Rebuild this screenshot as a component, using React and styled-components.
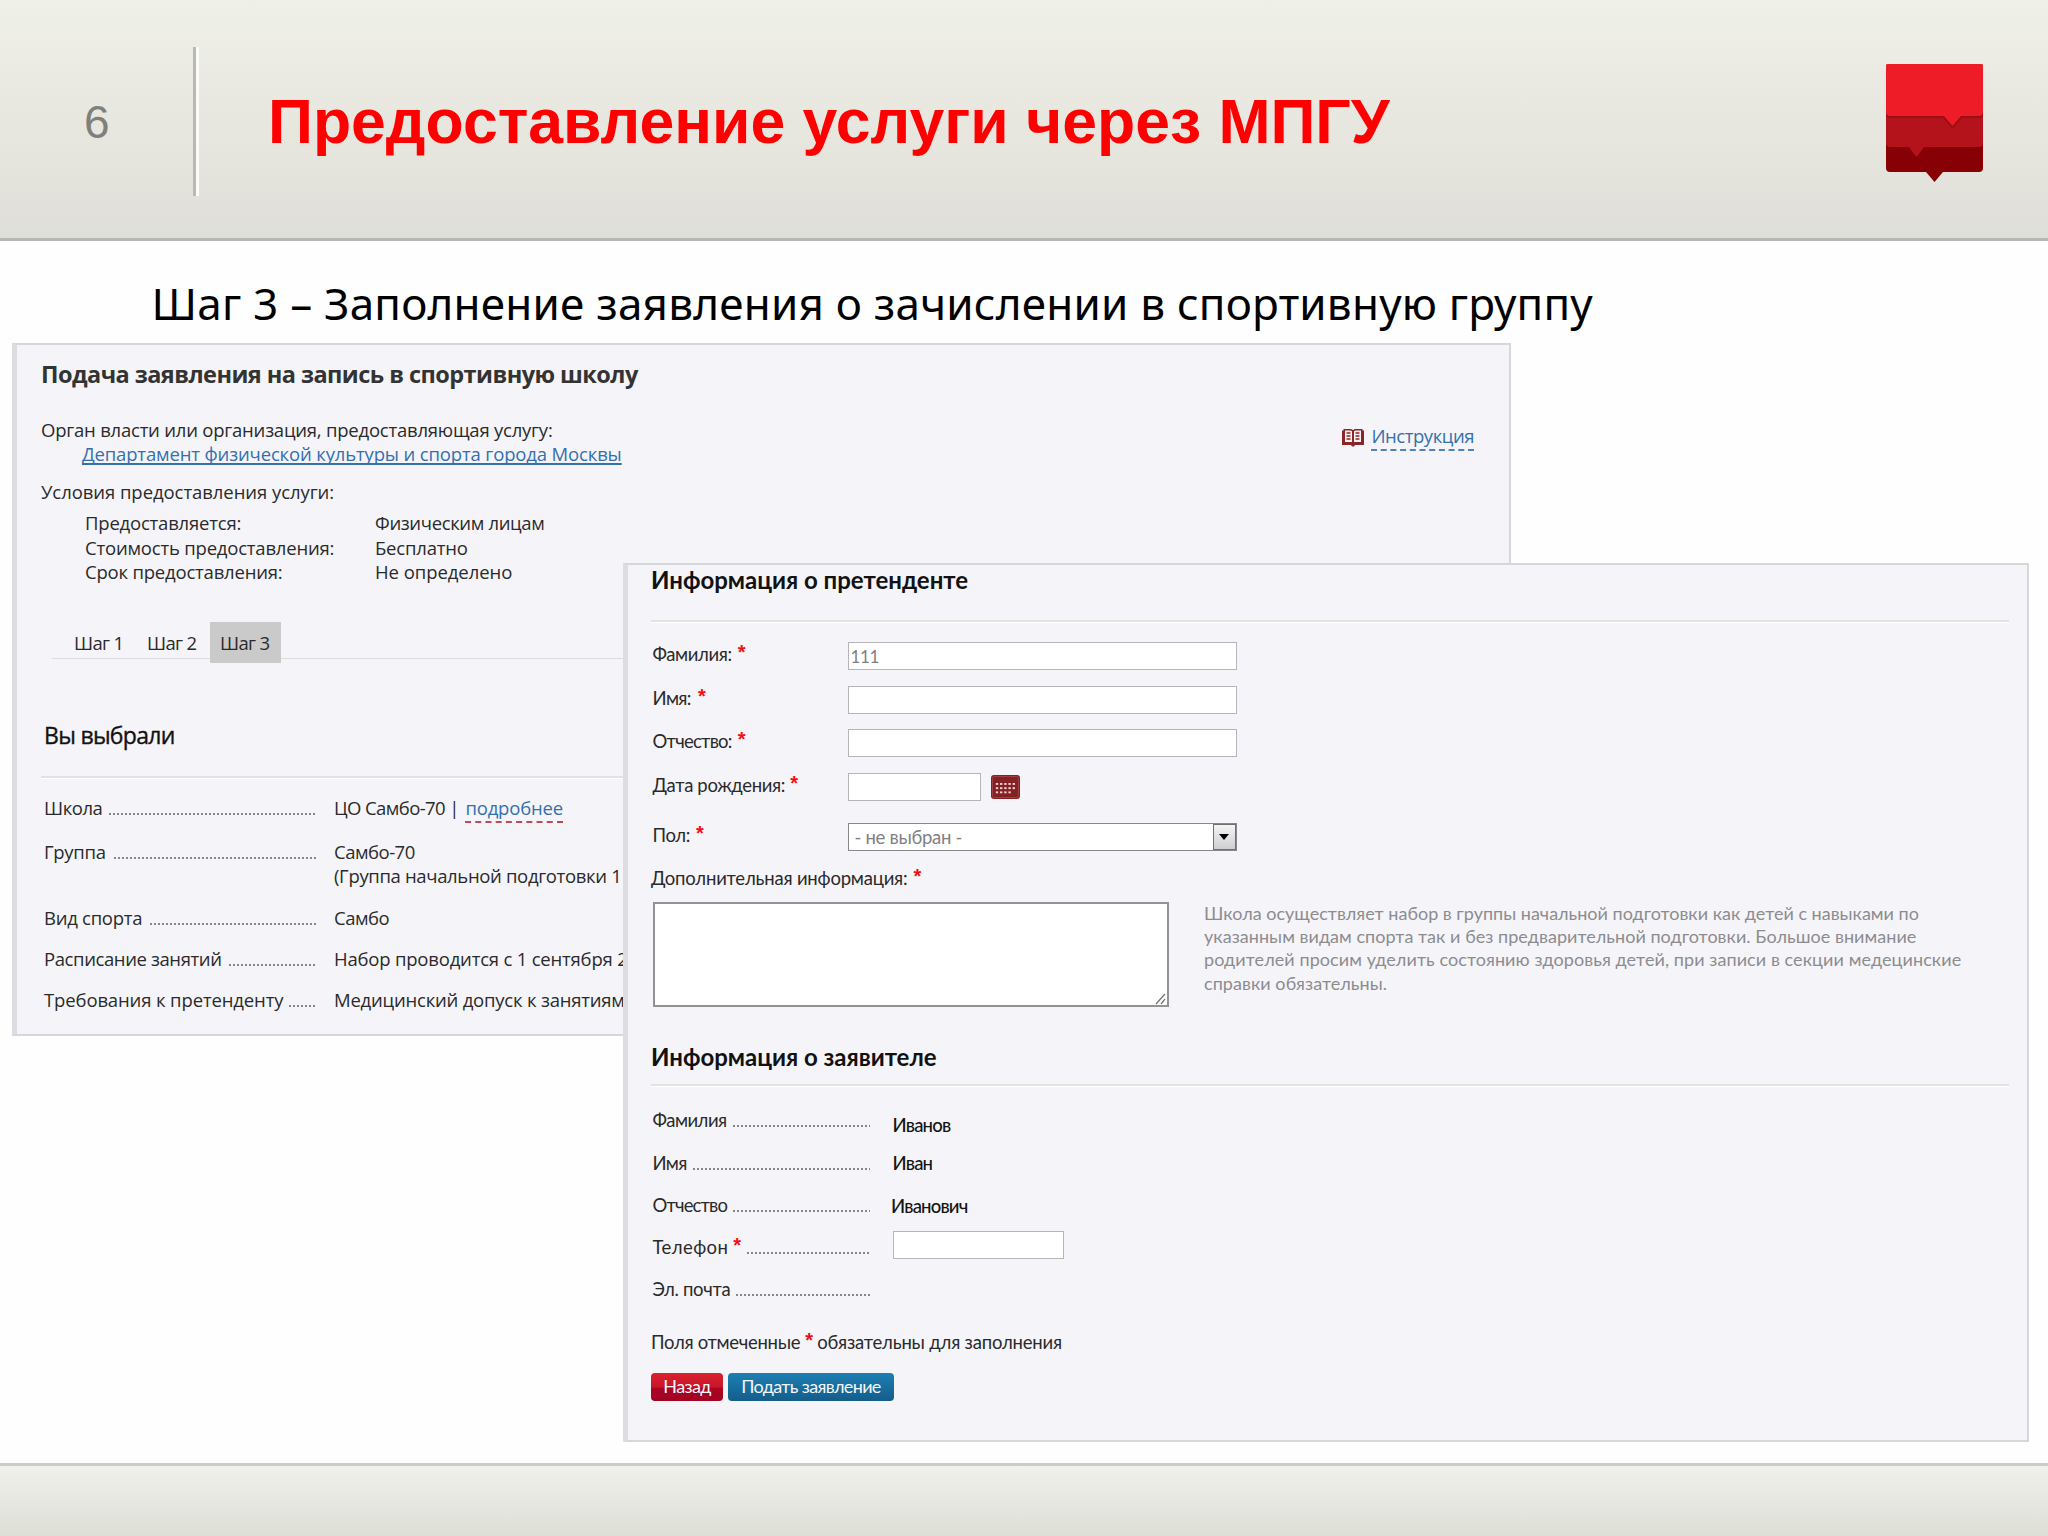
import React from "react";
import styled, { createGlobalStyle } from "styled-components";

const GlobalStyle = createGlobalStyle`
  * { box-sizing: border-box; }
  body { margin: 0; background: #fefefe; }
`;

const Slide = styled.div`
  width: 2048px;
  height: 1536px;
  display: flex;
  flex-direction: column;
  overflow: hidden;
  background: #fefefe;
`;

/* ---- header ---- */

const Header = styled.header`
  height: 241px;
  flex: none;
  display: flex;
  align-items: flex-start;
  padding: 0 65px 0 84px;
  background: linear-gradient(#eff0e8, #e6e5de 60%, #dfdfd9);
  border-bottom: 3px solid #b6b6b2;
  font-family: "Liberation Sans", Arial, sans-serif;
`;

const PageNumber = styled.div`
  width: 109px;
  font-size: 46px;
  line-height: 245px;
  color: #7f807a;
`;

const Divider = styled.div`
  width: 6px;
  height: 149px;
  margin: 47px 69px 0 0;
  background: linear-gradient(90deg, #b9b9b4 0 50%, #fbfbf8 50%);
`;

const Title = styled.h1`
  flex: 1;
  margin: 0;
  font-size: 62.5px;
  line-height: 242px;
  font-weight: 700;
  color: #fe0000;
  white-space: nowrap;
`;

const Logo = styled.svg`
  margin-top: 64px;
`;

/* ---- body ---- */

const Body = styled.main`
  position: relative;
  height: 1222px;
  flex: none;
`;

const Subtitle = styled.h2`
  margin: 0;
  padding: 32px 0 0 151.5px;
  height: 102px;
  font: 400 44px/60px "Noto Sans", sans-serif;
  letter-spacing: 0.22px;
  color: #000;
  white-space: nowrap;
`;

const Panel = styled.section`
  background: #f5f5f9;
  border: 2px solid #d6d7db;
  border-left: 5px solid #dcdce1;
  font-size: 18.5px;
  line-height: 24.4px;
  color: #2a2a2c;
  white-space: nowrap;
`;

const ServicePanel = styled(Panel)`
  width: 1499px;
  height: 693px;
  margin-left: 12px;
  padding: 13px 35px 0 24px;
  font-family: "Open Sans", sans-serif;
  letter-spacing: -0.2px;
`;

// lies over the bottom right part of the service panel
const FormPanel = styled(Panel)`
  position: absolute;
  left: 623px;
  top: 322px;
  width: 1406px;
  height: 879px;
  padding: 0 18px 0 23px;
  font-family: Lato, sans-serif;
  letter-spacing: -0.3px;
`;

const T = styled.span`
  letter-spacing: ${({ $ls }) => $ls}px;
`;

const PanelTitle = styled.h3`
  margin: 0 0 27.5px;
  font-size: 23.5px;
  line-height: 32px;
  font-weight: 700;
  letter-spacing: -0.55px;
  color: #333;
`;

const InfoRow = styled.div`
  display: flex;
  justify-content: space-between;
  height: 49px;
  margin-bottom: 13.2px;
`;

const OrgLink = styled.a`
  display: block;
  margin-left: 41px;
  letter-spacing: -0.15px;
  color: #3470ad;
  text-decoration: underline;
  text-decoration-thickness: 1.5px;
  text-underline-offset: 1.5px;
  text-decoration-skip-ink: none;
`;

const Instruction = styled.a`
  display: flex;
  gap: 6px;
  margin-top: 6px;
  height: 27px;
  color: #3470ad;
  letter-spacing: -0.45px;
  span { border-bottom: 2px dashed #4d83ba; }
  svg { margin-top: 4px; }
`;

const Terms = styled.dl`
  margin: 7.4px 0 38px 44px;
  display: grid;
  grid-template-columns: 290px auto;
  line-height: 24.3px;
  dd { margin: 0; }
`;

const Tabs = styled.nav`
  display: flex;
  height: 37px;
  margin: 0 0 59.5px 11px;
  border-bottom: 1.5px solid #dcdde0;
`;

const Tab = styled.div`
  width: ${({ $w }) => $w}px;
  height: 41px;
  padding: 9px 0 0 ${({ $pl }) => $pl}px;
  letter-spacing: -0.65px;
  background: ${({ $active }) => ($active ? "#cacaca" : "transparent")};
`;

const SectionTitle = styled.h3`
  margin: 0;
  border-bottom: 2px solid #e2e2e5;
  box-shadow: 0 1px 0 #fff;
  color: #121212;
  font-size: 24px;
`;

const ChoiceTitle = styled(SectionTitle)`
  padding: 0 0 25px 3px;
  margin-right: -30px;
  line-height: 32px;
  font-weight: 500;
  font-size: 23px;
  letter-spacing: -0.7px;
  -webkit-text-stroke: 0.35px #121212;
`;

const FormTitle = styled(SectionTitle)`
  height: ${({ $h }) => $h}px;
  line-height: 30px;
  font-weight: 700;
  letter-spacing: -0.02px;
`;

const Choices = styled.div`
  display: flex;
  flex-direction: column;
  gap: 16.9px;
  padding: 18px 0 0 3px;
`;

const Choice = styled.div`
  display: flex;
  align-items: flex-start;
  margin-bottom: ${({ $mb = 0 }) => $mb}px;
`;

const DottedLabel = styled.div`
  display: flex;
  align-items: baseline;
  gap: ${({ $gap = 7 }) => $gap}px;
  width: ${({ $w }) => $w}px;
  margin-right: ${({ $mr }) => $mr}px;
  letter-spacing: ${({ $ls }) => $ls}px;
  &::after {
    content: "";
    flex: 1;
    height: 2px;
    background: repeating-linear-gradient(90deg, #85858a 0 2px, transparent 2px 4px);
  }
`;

const MoreLink = styled.a`
  display: inline-block;
  height: 27.5px;
  margin: 0 0 -3px 2.5px;
  color: #3470ad;
  border-bottom: 2px dashed #c04a52;
`;

/* ---- form ---- */

const Required = styled.span`
  display: inline-block;
  font: 700 20px/20px "Liberation Sans", sans-serif;
  color: #f60d12;
  margin-left: ${({ $ml = 5 }) => $ml}px;
  transform: translateY(-2px);
`;

const Fields = styled.div`
  display: flex;
  flex-direction: column;
  gap: 15.7px;
  padding: 20px 0 0 1.5px;
`;

const Field = styled.label`
  display: flex;
  height: 28px;
  margin-top: ${({ $mt = 0 }) => $mt}px;
`;

const FieldLabel = styled.div`
  width: 195px;
  letter-spacing: ${({ $ls }) => $ls}px;
`;

const Box = styled.div`
  width: ${({ $w }) => $w}px;
  height: 28px;
  margin-top: ${({ $mt = 0 }) => $mt}px;
  padding: 2px 2px 0;
  border: 1.5px solid #b5b5ba;
  background: #fff;
  color: #808085;
  font-size: 17px;
`;

const SelectBox = styled(Box)`
  display: flex;
  justify-content: space-between;
  padding: 0 0 0 6px;
  line-height: 27px;
  font-size: 18.5px;
  border-color: #88888c;
`;

const SelectArrow = styled.div`
  width: 23px;
  display: grid;
  place-items: center;
  border: 1.5px solid #707074;
  background: linear-gradient(#f4f4f4, #cfcfd2);
`;

const Calendar = styled.svg`
  margin: 2px 0 0 10px;
`;

const ExtraLabel = styled.div`
  margin-top: 15px;
`;

const NoteRow = styled.div`
  display: flex;
  justify-content: space-between;
  padding: 11.5px 48px 0 1.5px;
  margin-bottom: 35px;
`;

const TextArea = styled.div`
  width: 516px;
  height: 105px;
  border: 2px solid #929297;
  background: #fff;
  display: flex;
  justify-content: flex-end;
  align-items: flex-end;
`;

const Hint = styled.p`
  width: 757px;
  margin: 0;
  font-size: 18px;
  line-height: 23.2px;
  letter-spacing: 0;
  color: #8c8c90;
`;

const Applicant = styled.div`
  padding: 22.5px 0 0 1.5px;
`;

const ApplicantRow = styled.div`
  display: flex;
  height: 42.2px;
`;

const ApplicantLabel = styled(DottedLabel)`
  width: 217px;
  gap: 6px;
  margin-right: 23px;
`;

const Value = styled.div`
  margin: ${({ $dy = 0 }) => $dy}px 0 0 ${({ $dx = 0 }) => $dx}px;
  color: #141414;
  font-weight: 500;
  letter-spacing: -0.8px;
`;

const Legend = styled.div`
  margin-top: 11px;
`;

const Buttons = styled.div`
  display: flex;
  gap: 5px;
  margin-top: 18px;
`;

const Button = styled.button`
  width: ${({ $w }) => $w}px;
  height: 28px;
  padding: 0;
  border: 0;
  border-radius: 4px;
  font: 18px/27px Lato, sans-serif;
  letter-spacing: -0.65px;
  color: #f4f6fa;
  background: ${({ $primary }) =>
    $primary
      ? "linear-gradient(#1d7fb2, #145d8a)"
      : "linear-gradient(#d8222e, #c9152a 50%, #ab0425 55%, #a10322)"};
`;

const Footer = styled.footer`
  flex: 1;
  border-top: 3px solid #cbcbc7;
  background: linear-gradient(#f0f0ec, #dddfd6);
`;

const choices = [
  { label: "Школа", ls: -0.45, mb: 2.6, value: <><T $ls={-0.6}>ЦО Самбо-70 | </T><MoreLink>подробнее</MoreLink></> },
  { label: "Группа", ls: -0.3, gap: 8, value: <><T $ls={-0.5}>Самбо-70</T><br /><T $ls={-0.34}>(Группа начальной подготовки 1</T></> },
  { label: "Вид спорта", ls: -0.27, gap: 8, value: <T $ls={-0.5}>Самбо</T> },
  { label: "Расписание занятий", ls: -0.4, value: <T $ls={-0.2}>Набор проводится с 1 сентября 2</T> },
  { label: "Требования к претенденту", ls: -0.13, gap: 6, value: <T $ls={-0.21}>Медицинский допуск к занятиям</T> },
];

const BookIcon = () => (
  <svg width="24" height="19" viewBox="0 0 24 19">
    <path d="M1 2.5h1.5V1H10l2 1 2-1h7.5v1.5H23V17h-9l-1 1.5h-2L10 17H1z" fill="#8b2529" />
    <path d="M4 2.5h5.5l1.500.8V14H4zM20 2.5h-5.5l-1.500.8V14h7z" fill="#fbf3f3" />
    <path d="M5.5 5h4M5.5 8h4M5.5 11h4M14.500 5h4M14.500 8h4M14.500 11h4" stroke="#8b2529" strokeWidth="1.3" />
  </svg>
);

const CalendarIcon = () => (
  <Calendar width="29" height="24" viewBox="0 0 29 24">
    <rect width="29" height="24" rx="3" fill="#852024" />
    <rect x="1.5" y="1.5" width="26" height="21" rx="2" fill="none" stroke="#9c4046" />
    {[8, 12.2, 16.4].map((y, row) =>
      [4.8, 9, 13.2, 17.4, 21.6].slice(0, row === 2 ? 4 : 5).map(x => (
        <rect key={`${x}-${y}`} x={x} y={y} width="2.4" height="1.9" fill="#f0cfcd" />
      ))
    )}
  </Calendar>
);

const Star = ({ ml }) => <Required $ml={ml}>*</Required>;

function Service() {
  return (
    <ServicePanel>
      <PanelTitle>Подача заявления на запись в спортивную школу</PanelTitle>
      <InfoRow>
        <div>
          <T $ls={-0.22}>Орган власти или организация, предоставляющая услугу:</T>
          <OrgLink>Департамент физической культуры и спорта города Москвы</OrgLink>
        </div>
        <Instruction>
          <BookIcon />
          <span>Инструкция</span>
        </Instruction>
      </InfoRow>
      <T $ls={-0.06}>Условия предоставления услуги:</T>
      <Terms>
        <dt>Предоставляется:</dt>
        <dd><T $ls={-0.36}>Физическим лицам</T></dd>
        <dt>Стоимость предоставления:</dt>
        <dd>Бесплатно</dd>
        <dt>Срок предоставления:</dt>
        <dd><T $ls={-0.05}>Не определено</T></dd>
      </Terms>
      <Tabs>
        <Tab $w={72} $pl={22}>Шаг 1</Tab>
        <Tab $w={86} $pl={23}>Шаг 2</Tab>
        <Tab $w={71} $pl={10} $active>Шаг 3</Tab>
      </Tabs>
      <ChoiceTitle>Вы выбрали</ChoiceTitle>
      <Choices>
        {choices.map(({ label, ls, gap, mb, value }) => (
          <Choice key={label} $mb={mb}>
            <DottedLabel $w={273} $mr={17} $gap={gap} $ls={ls}>{label}</DottedLabel>
            <div>{value}</div>
          </Choice>
        ))}
      </Choices>
    </ServicePanel>
  );
}

function ApplicationForm() {
  return (
    <FormPanel>
      <FormTitle $h={57}>Информация о претенденте</FormTitle>
      <Fields>
        <Field>
          <FieldLabel $ls={-0.4}>Фамилия:<Star ml={6} /></FieldLabel>
          <Box $w={389}>111</Box>
        </Field>
        <Field>
          <FieldLabel $ls={-0.6}>Имя:<Star ml={7} /></FieldLabel>
          <Box $w={389} />
        </Field>
        <Field>
          <FieldLabel $ls={-0.75}>Отчество:<Star ml={6} /></FieldLabel>
          <Box $w={389} />
        </Field>
        <Field>
          <FieldLabel $ls={-0.35}>Дата рождения:<Star /></FieldLabel>
          <Box $w={133} />
          <CalendarIcon />
        </Field>
        <Field $mt={6.3}>
          <FieldLabel $ls={-0.4}>Пол:<Star ml={6} /></FieldLabel>
          <SelectBox $w={389}>
            - не выбран -
            <SelectArrow>
              <svg width="10" height="6" viewBox="0 0 10 6"><path d="M0 0h10L5 6z" fill="#000" /></svg>
            </SelectArrow>
          </SelectBox>
        </Field>
      </Fields>
      <ExtraLabel><T $ls={-0.2}>Дополнительная информация:</T><Star ml={6} /></ExtraLabel>
      <NoteRow>
        <TextArea>
          <svg width="12" height="12" viewBox="0 0 12 12">
            <path d="M1 11L10 1M6 11l4-5" stroke="#77777b" strokeWidth="1.3" />
          </svg>
        </TextArea>
        <Hint>
          Школа осуществляет набор в группы начальной подготовки как детей с навыками по<br />
          <T $ls={0.04}>указанным видам спорта так и без предварительной подготовки. Большое внимание</T><br />
          <T $ls={0.08}>родителей просим уделить состоянию здоровья детей, при записи в секции медецинские</T><br />
          <T $ls={0.05}>справки обязательны.</T>
        </Hint>
      </NoteRow>
      <FormTitle $h={44}>Информация о заявителе</FormTitle>
      <Applicant>
        <ApplicantRow>
          <ApplicantLabel $ls={-0.5}>Фамилия</ApplicantLabel>
          <Value $dy={4.5}>Иванов</Value>
        </ApplicantRow>
        <ApplicantRow>
          <ApplicantLabel $ls={-0.7}>Имя</ApplicantLabel>
          <Value>Иван</Value>
        </ApplicantRow>
        <ApplicantRow>
          <ApplicantLabel $ls={-0.85}>Отчество</ApplicantLabel>
          <Value $dy={1} $dx={-1.5}>Иванович</Value>
        </ApplicantRow>
        <ApplicantRow>
          <ApplicantLabel $ls={0.4}><span>Телефон<Star /></span></ApplicantLabel>
          <Box $w={171} $mt={-4} />
        </ApplicantRow>
        <ApplicantRow>
          <ApplicantLabel $ls={-0.3}>Эл. почта</ApplicantLabel>
        </ApplicantRow>
      </Applicant>
      <Legend><T $ls={-0.3}>Поля отмеченные</T><Star /> <T $ls={-0.2}>обязательны для заполнения</T></Legend>
      <Buttons>
        <Button $w={72}>Назад</Button>
        <Button $w={166} $primary>Подать заявление</Button>
      </Buttons>
    </FormPanel>
  );
}

export default function App() {
  return (
    <Slide>
      <GlobalStyle />
      <Header>
        <PageNumber>6</PageNumber>
        <Divider />
        <Title>Предоставление услуги через МПГУ</Title>
        <Logo width="97" height="119" viewBox="0 0 97 119">
          <path d="M0 70h97v34q0 4-4 4H57l-8.500 10L40 108H4q-4 0-4-4z" fill="#870006" />
          <path d="M0 44h97v36q-1 3-4 3H38l-7.500 10L23 83H4q-3 0-4-3z" fill="#b5131b" />
          <path d="M0 2q0-2 2-2h93q2 0 2 2v49q-1 3-4 3H76l-9.500 11L57 54H4q-3 0-4-3z" fill="#9c0e16" />
          <path d="M0 2q0-2 2-2h93q2 0 2 2v47q-1 3-4 3H75l-8.500 10L58 52H4q-3 0-4-3z" fill="#ee1c27" />
        </Logo>
      </Header>
      <Body>
        <Subtitle>Шаг 3 – Заполнение заявления о зачислении в спортивную группу</Subtitle>
        <Service />
        <ApplicationForm />
      </Body>
      <Footer />
    </Slide>
  );
}
